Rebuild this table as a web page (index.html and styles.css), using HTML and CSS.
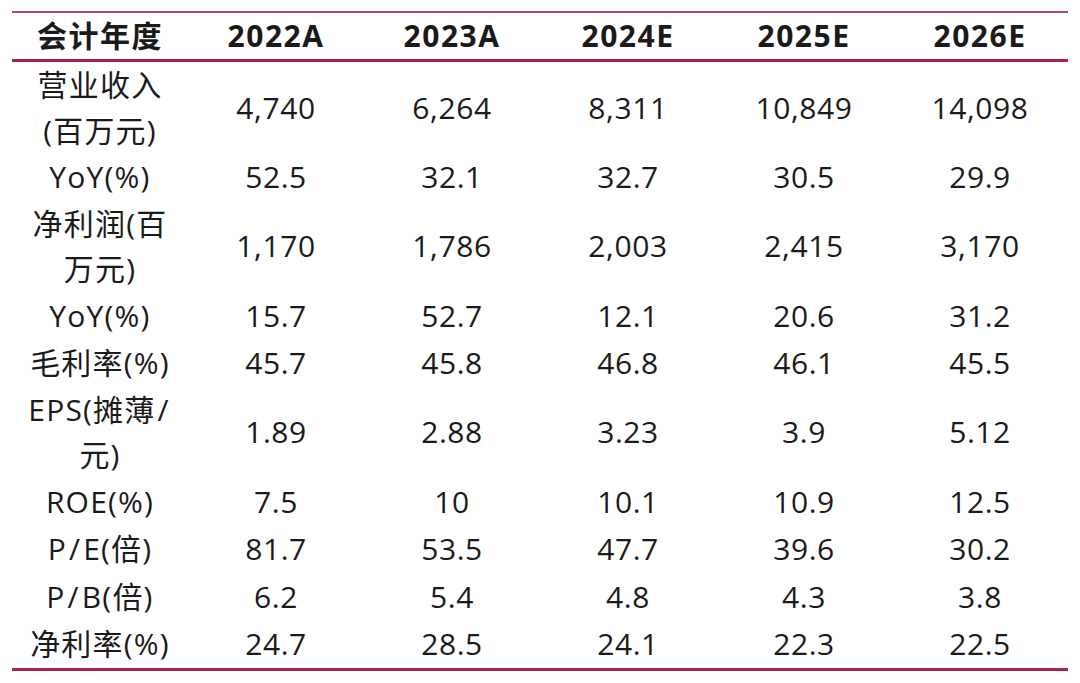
FILE: index.html
```html
<!DOCTYPE html>
<html lang="zh-CN">
<head>
<meta charset="utf-8">
<title>财务预测</title>
<link rel="stylesheet" href="styles.css">
</head>
<body>
<table class="fin">
  <colgroup>
    <col class="c"><col class="c"><col class="c"><col class="c"><col class="c"><col class="c">
  </colgroup>
  <thead>
    <tr>
      <th>会计年度</th><th>2022A</th><th>2023A</th><th>2024E</th><th>2025E</th><th>2026E</th>
    </tr>
  </thead>
  <tbody>
    <tr class="two"><td class="lbl">营业收入<br>(百万元)</td><td>4,740</td><td>6,264</td><td>8,311</td><td>10,849</td><td>14,098</td></tr>
    <tr class="one"><td class="lbl">YoY(%)</td><td>52.5</td><td>32.1</td><td>32.7</td><td>30.5</td><td>29.9</td></tr>
    <tr class="two"><td class="lbl">净利润(百<br>万元)</td><td>1,170</td><td>1,786</td><td>2,003</td><td>2,415</td><td>3,170</td></tr>
    <tr class="one"><td class="lbl">YoY(%)</td><td>15.7</td><td>52.7</td><td>12.1</td><td>20.6</td><td>31.2</td></tr>
    <tr class="one"><td class="lbl">毛利率(%)</td><td>45.7</td><td>45.8</td><td>46.8</td><td>46.1</td><td>45.5</td></tr>
    <tr class="two"><td class="lbl">EPS(摊薄<span class="sl">/</span><br>元)</td><td>1.89</td><td>2.88</td><td>3.23</td><td>3.9</td><td>5.12</td></tr>
    <tr class="one"><td class="lbl">ROE(%)</td><td>7.5</td><td>10</td><td>10.1</td><td>10.9</td><td>12.5</td></tr>
    <tr class="one"><td class="lbl">P<span class="sl">/</span>E(倍)</td><td>81.7</td><td>53.5</td><td>47.7</td><td>39.6</td><td>30.2</td></tr>
    <tr class="one"><td class="lbl">P<span class="sl">/</span>B(倍)</td><td>6.2</td><td>5.4</td><td>4.8</td><td>4.3</td><td>3.8</td></tr>
    <tr class="one"><td class="lbl">净利率(%)</td><td>24.7</td><td>28.5</td><td>24.1</td><td>22.3</td><td>22.5</td></tr>
  </tbody>
</table>
</body>
</html>
```
FILE: styles.css
```css
html, body {
  margin: 0;
  padding: 0;
  background: #ffffff;
}

body {
  font-family: "Open Sans", "Noto Sans", "Noto Sans CJK SC", sans-serif;
  color: #1a1a1a;
}

.fin {
  border-collapse: collapse;
  table-layout: fixed;
  width: 1056px;
  margin: 11px 0 0 12px;
  font-size: 30px;
}

.fin .c {
  width: 176px;
}

.fin th,
.fin td {
  padding: 0;
  text-align: center;
  vertical-align: middle;
  white-space: nowrap;
}

.fin th {
  font-weight: 700;
  line-height: 46px;
  letter-spacing: 1.5px;
  border-top: 2px solid #b6486a;
  border-bottom: 3px solid #a3234b;
}

.fin td {
  font-weight: 400;
  letter-spacing: 0.6px;
}

.fin .one td {
  line-height: 47.5px;
}

.fin .two td {
  line-height: 45.5px;
}

.fin td.lbl {
  letter-spacing: 1.2px;
}

.fin .sl {
  padding: 0 2px;
}

.fin tbody tr:last-child td {
  border-bottom: 3px solid #a3234b;
}
```
